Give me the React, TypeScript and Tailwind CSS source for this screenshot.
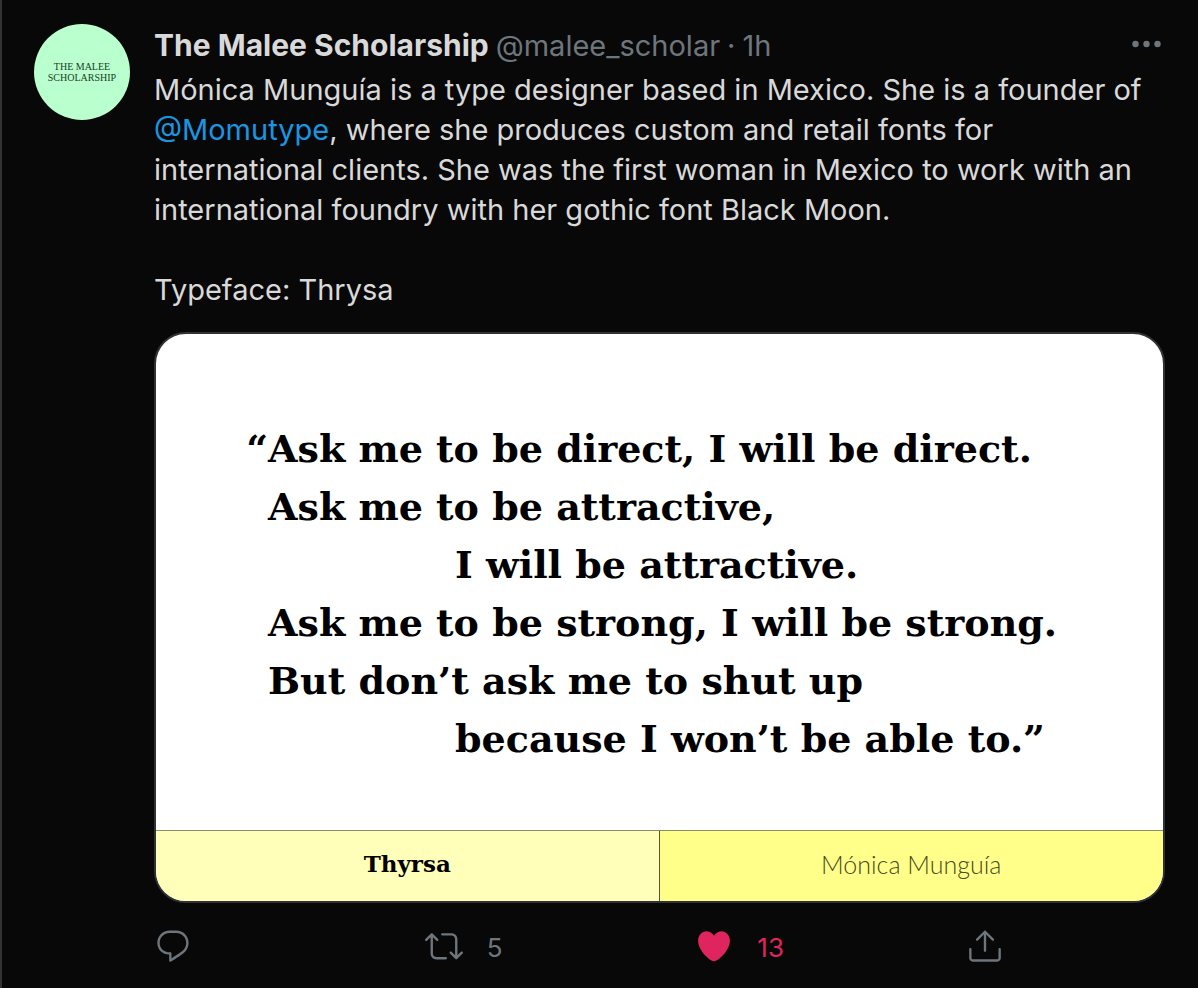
import React from "react";

const REPLY =
  "M14.046 2.242l-4.148-.01h-.002c-4.374 0-7.8 3.427-7.8 7.802 0 4.098 3.186 7.206 7.465 7.37v3.828c0 .108.044.286.12.403.142.225.384.347.632.347.138 0 .277-.038.402-.118.264-.168 6.473-4.14 8.088-5.506 1.902-1.61 3.04-3.97 3.043-6.312v-.017c-.006-4.367-3.43-7.787-7.8-7.788zm3.787 12.972c-1.134.96-4.862 3.405-6.772 4.643V16.67c0-.414-.335-.75-.75-.75h-.396c-3.66 0-6.318-2.476-6.318-5.886 0-3.534 2.768-6.302 6.3-6.302l4.147.01h.002c3.532 0 6.3 2.766 6.302 6.296-.003 1.91-.942 3.844-2.514 5.176z";
const RETWEET =
  "M23.77 15.67c-.292-.293-.767-.293-1.06 0l-2.22 2.22V7.65c0-2.068-1.683-3.75-3.75-3.75h-5.85c-.414 0-.75.336-.75.75s.336.75.75.75h5.85c1.24 0 2.25 1.01 2.25 2.25v10.24l-2.22-2.22c-.293-.293-.768-.293-1.06 0s-.294.768 0 1.06l3.5 3.5c.145.147.337.22.53.22s.383-.072.53-.22l3.5-3.5c.294-.292.294-.767 0-1.06zm-10.66 3.28H7.26c-1.24 0-2.25-1.01-2.25-2.25V6.46l2.22 2.22c.148.147.34.22.532.22s.384-.073.53-.22c.293-.293.293-.768 0-1.06l-3.5-3.5c-.293-.294-.768-.294-1.06 0l-3.5 3.5c-.294.292-.294.767 0 1.06s.767.293 1.06 0l2.22-2.22V16.7c0 2.068 1.683 3.75 3.75 3.75h5.85c.414 0 .75-.336.75-.75s-.337-.75-.75-.75z";
const HEART =
  "M12 21.638h-.014C9.403 21.59 1.95 14.856 1.95 8.478c0-3.064 2.525-5.754 5.403-5.754 2.29 0 3.83 1.58 4.646 2.73.814-1.148 2.354-2.73 4.645-2.73 2.88 0 5.404 2.69 5.404 5.755 0 6.376-7.454 13.11-10.037 13.157H12z";
const SHARE =
  "M17.53 7.47l-5-5c-.293-.293-.768-.293-1.06 0l-5 5c-.294.293-.294.768 0 1.06s.767.294 1.06 0l3.72-3.72V15c0 .414.336.75.75.75s.75-.336.75-.75V4.81l3.72 3.72c.146.147.338.22.53.22s.384-.072.53-.22c.293-.293.293-.767 0-1.06zM19.708 21.944H4.292C3.028 21.944 2 20.916 2 19.652V14c0-.414.336-.75.75-.75s.75.336.75.75v5.652c0 .437.355.792.792.792h15.416c.437 0 .792-.355.792-.792V14c0-.414.336-.75.75-.75s.75.336.75.75v5.652c0 1.264-1.028 2.292-2.292 2.292z";

type ActionProps = { label: string; path: string; count?: number; className?: string };

function Action({ label, path, count, className = "" }: ActionProps) {
  return (
    <button
      type="button"
      aria-label={count === undefined ? label : `${label}, ${count}`}
      className={`flex items-center gap-6 justify-self-start ${className}`}
    >
      <svg viewBox="0 0 24 24" fill="currentColor" aria-hidden="true" className="size-[38px] shrink-0">
        <path d={path} />
      </svg>
      {count !== undefined && <span className="pt-1 text-[26px] leading-8">{count}</span>}
    </button>
  );
}

type QuoteLine = { text: string; indented?: boolean; opening?: boolean };

const QUOTE: QuoteLine[] = [
  { text: "Ask me to be direct, I will be direct.", opening: true },
  { text: "Ask me to be attractive," },
  { text: "I will be attractive.", indented: true },
  { text: "Ask me to be strong, I will be strong." },
  { text: "But don’t ask me to shut up" },
  { text: "because I won’t be able to.”", indented: true },
];

function Specimen() {
  return (
    <figure className="mt-[22px] overflow-hidden rounded-[32px] border-2 border-[#2f3336] bg-white text-black">
      <blockquote className="pt-[86px] pb-[62px] pl-[87px] font-['DejaVu_Serif',serif] text-[38px] leading-[58px] font-bold whitespace-nowrap">
        {QUOTE.map((line) => (
          <p key={line.text} className="flex">
            <span className={line.indented ? "w-[212px] shrink-0" : "flex w-[25px] shrink-0 justify-end"}>
              {line.opening ? "“" : ""}
            </span>
            <span>{line.text}</span>
          </p>
        ))}
      </blockquote>
      <figcaption className="grid grid-cols-2 border-t border-[#8c8c6a] text-center leading-[66px]">
        <span className="border-r border-[#55552f] bg-[#ffffb9] pb-1 font-['DejaVu_Serif',serif] text-[23px] font-bold">
          Thyrsa
        </span>
        <span className="bg-[#ffff8a] pb-1 font-['Lato',sans-serif] text-[25px] font-light text-[#4a4a20]">
          Mónica Munguía
        </span>
      </figcaption>
    </figure>
  );
}

export default function App() {
  return (
    <main className="min-h-screen border-l-2 border-[#2f3336] bg-[#080808] font-['Inter',sans-serif] text-[#d9d9d9]">
      <article className="flex gap-6 pt-6 pr-[33px] pb-6 pl-8">
        <a
          href="#profile"
          className="flex size-24 shrink-0 flex-col items-center justify-center rounded-full bg-[#baffce] text-center font-['Liberation_Serif',serif] text-[10px] leading-[11px] text-[#173d27]"
        >
          <span>THE MALEE</span>
          <span>SCHOLARSHIP</span>
        </a>
        <div className="min-w-0 flex-1">
          <header className="flex items-center justify-between text-[29px] leading-[42px]">
            <div className="flex items-baseline gap-[7px] whitespace-nowrap text-[#6e767d]">
              <a href="#profile" className="text-[30px] font-bold text-[#d9d9d9]">
                The Malee Scholarship
              </a>
              <span>@malee_scholar</span>
              <span>·</span>
              <time>1h</time>
            </div>
            <button type="button" aria-label="More" className="text-[#6e767d]">
              <svg viewBox="0 0 38 38" fill="currentColor" aria-hidden="true" className="size-[38px]">
                <circle cx="8.5" cy="17" r="3.2" />
                <circle cx="19.5" cy="17" r="3.2" />
                <circle cx="30.5" cy="17" r="3.2" />
              </svg>
            </button>
          </header>
          <div className="mt-[3px] text-[29px] leading-10">
            <p>
              Mónica Munguía is a type designer based in Mexico. She is a founder of{" "}
              <a href="#momutype" className="text-[#1b95e0]">
                @Momutype
              </a>
              , where she produces custom and retail fonts for international clients. She was the first woman in
              Mexico to work with an international foundry with her gothic font Black Moon.
            </p>
            <p className="mt-10">Typeface: Thrysa</p>
          </div>
          <Specimen />
          <footer className="mt-6 grid max-w-[850px] grid-cols-[1fr_1fr_1fr_auto] text-[#6e767d]">
            <Action label="Reply" path={REPLY} />
            <Action label="Retweet" path={RETWEET} count={5} />
            <Action label="Like" path={HEART} count={13} className="text-[#e0245e]" />
            <Action label="Share" path={SHARE} />
          </footer>
        </div>
      </article>
    </main>
  );
}
